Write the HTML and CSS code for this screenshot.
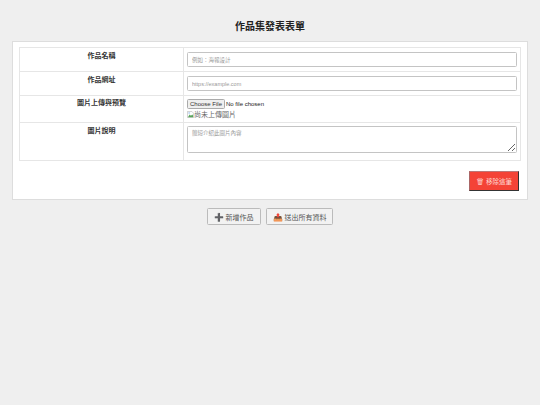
FILE: index.html
```html
<!DOCTYPE html>
<html lang="zh-Hant">
<head>
<meta charset="utf-8">
<title>作品集發表表單</title>
<link rel="stylesheet" href="styles.css">
</head>
<body>
<h1 class="title">作品集發表表單</h1>
<section class="card">
  <table class="form-table">
    <tr class="row-name">
      <th>作品名稱</th>
      <td><input class="field" type="text" placeholder="例如：海報設計"></td>
    </tr>
    <tr class="row-url">
      <th>作品網址</th>
      <td><input class="field" type="text" placeholder="https://example.com"></td>
    </tr>
    <tr class="row-file">
      <th>圖片上傳與預覽</th>
      <td>
        <input class="file" type="file">
        <div class="preview"><svg class="broken" viewBox="0 0 8 8" aria-hidden="true"><path d="M.5.5h5l2 2v5h-7z" fill="#fff" stroke="#a9a9a9" stroke-width=".6"/><path d="M1 7l2-3 1.500 1.500L6 4l1 1.500V7z" fill="#5aa45a"/><path d="M1.500 1.500h2v1.500h-2z" fill="#a8c8f0"/></svg>尚未上傳圖片</div>
      </td>
    </tr>
    <tr class="row-desc">
      <th>圖片說明</th>
      <td><textarea class="area" placeholder="簡短介紹此圖片內容"></textarea></td>
    </tr>
  </table>
  <div class="card-actions">
    <button class="btn-remove" type="button">🗑 移除這筆</button>
  </div>
</section>
<div class="actions">
  <button class="btn" type="button"><span class="icon">➕</span> 新增作品</button>
  <button class="btn" type="button"><span class="icon">📤</span> 送出所有資料</button>
</div>
</body>
</html>
```
FILE: styles.css
```css
* { box-sizing: border-box; }
html, body { margin: 0; }
body {
  height: 405px;
  padding: 20px 12px 0;
  background: #efefef;
  font-family: "Liberation Sans", "Noto Sans CJK TC", sans-serif;
  color: #222;
  overflow: hidden;
}
.title {
  margin: 0 0 7px;
  height: 14px;
  font-size: 10px;
  line-height: 13px;
  font-weight: 700;
  text-align: center;
  color: #222;
}
.card {
  height: 159px;
  padding: 5px 6px;
  background: #fff;
  border: 1px solid #ddd;
}
.form-table {
  width: 502px;
  height: 113px;
  table-layout: fixed;
  border-collapse: collapse;
  font-size: 7px;
}
.form-table th, .form-table td {
  border: 1px solid #e6e6e6;
  vertical-align: top;
  padding: 4px 3px;
}
.form-table th {
  width: 164px;
  padding-top: 3px;
  line-height: 9px;
  font-weight: 700;
  text-align: center;
  color: #333;
}
.row-name { height: 24px; }
.row-url { height: 24px; }
.row-file { height: 27px; }
.row-file td { padding-top: 3px; padding-bottom: 1px; }
.row-file th { padding-top: 2px; }
.row-desc { height: 38px; }
.row-desc td { padding-top: 3px; }
.field, .area {
  display: block;
  width: 100%;
  padding: 0 4px;
  border: 1px solid #c4c4c4;
  border-radius: 1.500px;
  background: #fff;
  font: 5.500px "Liberation Sans", "Noto Sans CJK TC", sans-serif;
  outline: none;
}
.field { height: 15px; }
.area { height: 27px; padding-top: 2px; resize: vertical; }
.field::placeholder, .area::placeholder { color: #999; }
.file {
  display: block;
  width: 100%;
  height: 10px;
  padding: 0;
  font: 6px/10px "Liberation Sans", sans-serif;
  color: #222;
}
.file::file-selector-button {
  width: 38px;
  height: 10px;
  margin-right: 1px;
  padding: 0;
  border: 1px solid #aaa;
  border-radius: 1.500px;
  background: #efefef;
  font: 6px "Liberation Sans", sans-serif;
  color: #333;
}
.preview {
  display: flex;
  align-items: center;
  height: 10px;
  font-size: 7px;
  color: #666;
}
.broken { width: 7px; height: 7px; flex: none; }
.card-actions {
  display: flex;
  justify-content: flex-end;
  padding: 10px 2px 0 0;
}
.btn-remove {
  width: 50px;
  height: 20px;
  padding: 0;
  border: 1px solid #333;
  border-top-color: #b77;
  border-left-color: #a66;
  background: #f44336;
  color: #ffd5d0;
  font: 6.500px "Liberation Sans", "Noto Sans CJK TC", sans-serif;
}
.actions {
  display: flex;
  justify-content: center;
  gap: 5px;
  margin-top: 8px;
}
.btn {
  height: 17px;
  padding: 0 6px;
  border: 1px solid #bbb;
  border-radius: 1.500px;
  background: #f2f2f2;
  color: #555;
  font: 7px "Liberation Sans", "Noto Sans CJK TC", sans-serif;
}
.icon { font-size: 8px; }
```
